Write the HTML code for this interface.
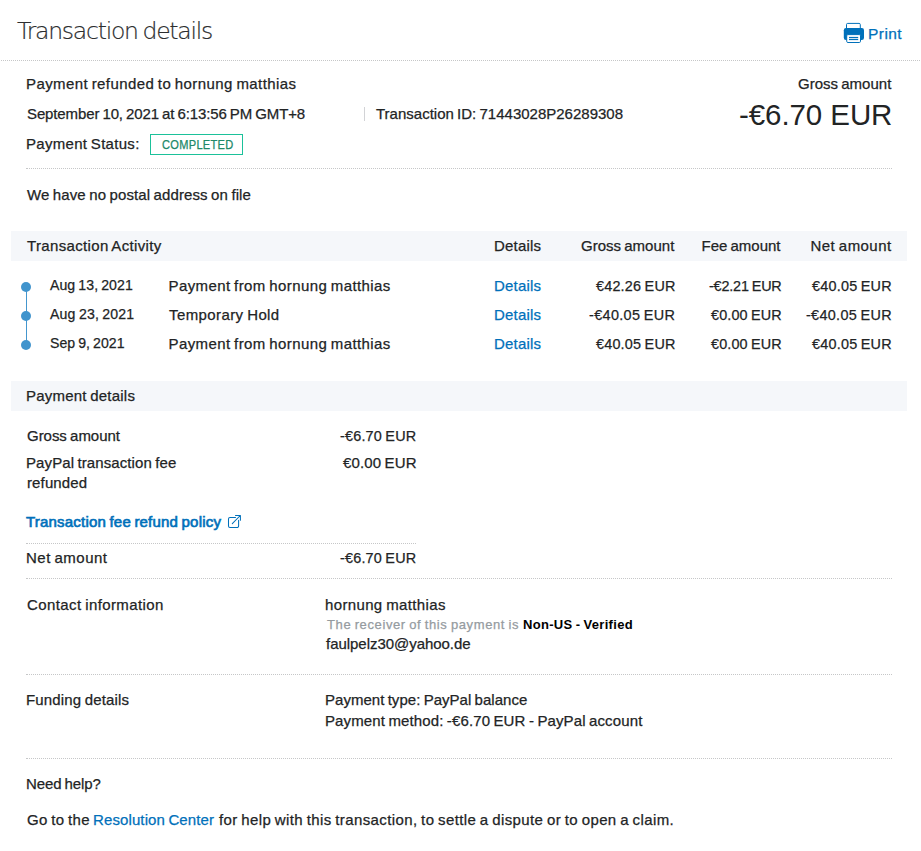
<!DOCTYPE html>
<html lang="en">
<head>
<meta charset="utf-8">
<title>Transaction details</title>
<style>
html,body{margin:0;padding:0;background:#fff;}
body{width:921px;height:851px;position:relative;overflow:hidden;font-family:"Liberation Sans", sans-serif;color:#222425;}
.t{position:absolute;white-space:nowrap;line-height:20px;word-spacing:-0.06em;-webkit-text-stroke:0.25px;}
.dl{position:absolute;height:0;border-top:1px dotted #c6c7c8;}
.band{position:absolute;left:11px;width:896px;height:30px;background:#f5f7fa;}
.dot{position:absolute;left:21px;width:10px;height:10px;border-radius:50%;background:#4094cd;}
</style>
</head>
<body>
<div class="dl" style="left:-1px;width:923px;top:60px;"></div>
<div class="dl" style="left:26px;width:866px;top:168px;"></div>
<div class="band" style="top:231px;"></div>
<div class="band" style="top:381px;"></div>
<div style="position:absolute;left:26px;top:287px;width:1px;height:58px;background:#4496ce;"></div>
<div class="dot" style="top:282px;"></div>
<div class="dot" style="top:311px;"></div>
<div class="dot" style="top:340px;"></div>
<div style="position:absolute;left:150px;top:134px;width:91px;height:19px;border:1px solid #1bc19a;"></div>
<div style="position:absolute;left:363.6px;top:107px;width:1.8px;height:13.5px;background:#d2d3d6;"></div>
<div class="dl" style="left:26px;width:390px;top:543px;"></div>
<div class="dl" style="left:26px;width:866px;top:578px;"></div>
<div class="dl" style="left:26px;width:866px;top:674px;"></div>
<div class="dl" style="left:26px;width:866px;top:758px;"></div>
<svg style="position:absolute;left:838px;top:18px;" width="32" height="30" viewBox="838 18 32 30"><rect x="846.5" y="23.4" width="13.8" height="6.5" rx="1.2" fill="#fff" stroke="#0070ba" stroke-width="1"/><rect x="843.8" y="28" width="20.2" height="12" rx="2.2" fill="#0070ba"/><rect x="846.7" y="34.6" width="13.8" height="7.9" rx="1.2" fill="#fff" stroke="#0070ba" stroke-width="1"/><rect x="849" y="36.9" width="9.2" height="1.2" fill="#0070ba"/><rect x="849" y="38.9" width="9.2" height="1.2" fill="#0070ba"/></svg>
<svg style="position:absolute;left:216px;top:508px;" width="32" height="30" viewBox="216 508 32 30" fill="none" stroke="#0070ba" stroke-width="1.05" stroke-linecap="round" stroke-linejoin="round"><path d="M235.5 517.500H230a1.500 1.500 0 0 0-1.500 1.500V526a1.500 1.500 0 0 0 1.500 1.500H237.100a1.500 1.500 0 0 0 1.500-1.500V520.300"/><path d="M232.300 523.600 240.300 515.500M235.500 515.500H240.400V520.300"/></svg>
<span class="t" id="title" style="left:17.00px;top:21.00px;font-size:23.50px;letter-spacing:-1.250px;color:#2c2e2f;font-family:'DejaVu Sans Light','DejaVu Sans',sans-serif;font-weight:200;-webkit-text-stroke:0.2px;">Transaction details</span>
<span class="t" id="print" style="left:868.00px;top:24.00px;font-size:15.50px;letter-spacing:0.450px;color:#0070ba;">Print</span>
<span class="t" id="l1" style="left:26.00px;top:74.01px;font-size:15.00px;letter-spacing:0.406px;">Payment refunded to hornung matthias</span>
<span class="t" id="l2" style="left:27.00px;top:104.01px;font-size:15.00px;letter-spacing:-0.122px;">September 10, 2021 at 6:13:56 PM GMT+8</span>
<span class="t" id="tid" style="left:376.00px;top:104.01px;font-size:15.00px;letter-spacing:-0.000px;">Transaction ID: 71443028P26289308</span>
<span class="t" id="ps" style="left:26.00px;top:134.01px;font-size:15.00px;letter-spacing:0.296px;">Payment Status:</span>
<span class="t" id="badge" style="left:162.00px;top:135.01px;font-size:12.00px;letter-spacing:0.342px;color:#208868;transform:scaleX(0.92);transform-origin:0 0;">COMPLETED</span>
<span class="t" id="ga" style="left:798.00px;top:74.01px;font-size:15.00px;letter-spacing:0.000px;">Gross amount</span>
<span class="t" id="big" style="left:739.00px;top:105.01px;font-size:29.50px;letter-spacing:-0.080px;-webkit-text-stroke:0;word-spacing:0;">-€6.70 EUR</span>
<span class="t" id="addr" style="left:27.00px;top:185.01px;font-size:15.00px;letter-spacing:0.113px;">We have no postal address on file</span>
<span class="t" id="ta" style="left:27.00px;top:236.01px;font-size:15.00px;letter-spacing:0.341px;">Transaction Activity</span>
<span class="t" id="hd" style="left:494.00px;top:236.01px;font-size:15.00px;letter-spacing:0.180px;">Details</span>
<span class="t" id="hg" style="left:581.00px;top:236.01px;font-size:15.00px;letter-spacing:0.000px;">Gross amount</span>
<span class="t" id="hf" style="left:701.50px;top:236.01px;font-size:15.00px;letter-spacing:-0.020px;">Fee amount</span>
<span class="t" id="hn" style="left:810.50px;top:236.01px;font-size:15.00px;letter-spacing:0.440px;">Net amount</span>
<span class="t" id="r0d" style="left:50.00px;top:275.01px;font-size:15.00px;letter-spacing:0.052px;transform:scaleX(0.94);transform-origin:0 0;">Aug 13, 2021</span>
<span class="t" id="r0t" style="left:168.50px;top:276.01px;font-size:15.00px;letter-spacing:0.392px;">Payment from hornung matthias</span>
<span class="t" id="r0l" style="left:494.00px;top:276.01px;font-size:15.00px;letter-spacing:0.180px;color:#0070ba;">Details</span>
<span class="t" id="r0g" style="left:596.00px;top:276.01px;font-size:15.00px;letter-spacing:0.208px;transform:scaleX(0.96);transform-origin:0 0;">€42.26 EUR</span>
<span class="t" id="r0f" style="left:709.00px;top:276.01px;font-size:15.00px;letter-spacing:-0.188px;transform:scaleX(0.96);transform-origin:0 0;">-€2.21 EUR</span>
<span class="t" id="r0n" style="left:812.00px;top:276.01px;font-size:15.00px;letter-spacing:0.229px;transform:scaleX(0.96);transform-origin:0 0;">€40.05 EUR</span>
<span class="t" id="r1d" style="left:50.00px;top:304.01px;font-size:15.00px;letter-spacing:0.191px;transform:scaleX(0.94);transform-origin:0 0;">Aug 23, 2021</span>
<span class="t" id="r1t" style="left:169.00px;top:305.01px;font-size:15.00px;letter-spacing:0.402px;">Temporary Hold</span>
<span class="t" id="r1l" style="left:494.00px;top:305.01px;font-size:15.00px;letter-spacing:0.180px;color:#0070ba;">Details</span>
<span class="t" id="r1g" style="left:589.00px;top:305.01px;font-size:15.00px;letter-spacing:0.375px;transform:scaleX(0.96);transform-origin:0 0;">-€40.05 EUR</span>
<span class="t" id="r1f" style="left:711.00px;top:305.01px;font-size:15.00px;letter-spacing:0.141px;transform:scaleX(0.96);transform-origin:0 0;">€0.00 EUR</span>
<span class="t" id="r1n" style="left:806.00px;top:305.01px;font-size:15.00px;letter-spacing:0.337px;transform:scaleX(0.96);transform-origin:0 0;">-€40.05 EUR</span>
<span class="t" id="r2d" style="left:50.00px;top:333.01px;font-size:15.00px;letter-spacing:0.019px;transform:scaleX(0.94);transform-origin:0 0;">Sep 9, 2021</span>
<span class="t" id="r2t" style="left:168.50px;top:334.01px;font-size:15.00px;letter-spacing:0.392px;">Payment from hornung matthias</span>
<span class="t" id="r2l" style="left:494.00px;top:334.01px;font-size:15.00px;letter-spacing:0.180px;color:#0070ba;">Details</span>
<span class="t" id="r2g" style="left:596.00px;top:334.01px;font-size:15.00px;letter-spacing:0.208px;transform:scaleX(0.96);transform-origin:0 0;">€40.05 EUR</span>
<span class="t" id="r2f" style="left:711.00px;top:334.01px;font-size:15.00px;letter-spacing:0.141px;transform:scaleX(0.96);transform-origin:0 0;">€0.00 EUR</span>
<span class="t" id="r2n" style="left:812.00px;top:334.01px;font-size:15.00px;letter-spacing:0.229px;transform:scaleX(0.96);transform-origin:0 0;">€40.05 EUR</span>
<span class="t" id="pd" style="left:26.00px;top:386.01px;font-size:15.00px;letter-spacing:0.219px;">Payment details</span>
<span class="t" id="pg" style="left:27.00px;top:426.01px;font-size:15.00px;letter-spacing:-0.033px;">Gross amount</span>
<span class="t" id="pgv" style="left:340.00px;top:426.01px;font-size:15.00px;letter-spacing:0.208px;transform:scaleX(0.96);transform-origin:0 0;">-€6.70 EUR</span>
<span class="t" id="pf1" style="left:26.00px;top:453.01px;font-size:15.00px;letter-spacing:0.094px;">PayPal transaction fee</span>
<span class="t" id="pfv" style="left:343.00px;top:453.01px;font-size:15.00px;letter-spacing:0.135px;">€0.00 EUR</span>
<span class="t" id="pf2" style="left:27.00px;top:473.01px;font-size:15.00px;letter-spacing:0.129px;">refunded</span>
<span class="t" id="pol" style="left:26.00px;top:512.01px;font-size:15.00px;letter-spacing:0.199px;color:#0070ba;-webkit-text-stroke:0.65px;">Transaction fee refund policy</span>
<span class="t" id="na" style="left:26.00px;top:548.00px;font-size:15.00px;letter-spacing:0.480px;">Net amount</span>
<span class="t" id="nav" style="left:340.00px;top:548.00px;font-size:15.00px;letter-spacing:0.208px;transform:scaleX(0.96);transform-origin:0 0;">-€6.70 EUR</span>
<span class="t" id="ci" style="left:27.00px;top:595.00px;font-size:15.00px;letter-spacing:0.400px;">Contact information</span>
<span class="t" id="cn" style="left:325.00px;top:595.01px;font-size:15.00px;letter-spacing:0.360px;">hornung matthias</span>
<span class="t" id="cr" style="left:327.00px;top:615.00px;font-size:13.00px;letter-spacing:0.612px;color:#959b9f;">The receiver of this payment is</span>
<span class="t" id="cv" style="left:523.00px;top:615.00px;font-size:13.00px;letter-spacing:0.315px;color:#000;font-weight:bold;-webkit-text-stroke:0;">Non-US - Verified</span>
<span class="t" id="ce" style="left:326.00px;top:634.00px;font-size:15.00px;letter-spacing:-0.040px;">faulpelz30@yahoo.de</span>
<span class="t" id="fd" style="left:26.00px;top:690.01px;font-size:15.00px;letter-spacing:0.154px;">Funding details</span>
<span class="t" id="ft" style="left:325.00px;top:690.01px;font-size:15.00px;letter-spacing:0.027px;">Payment type: PayPal balance</span>
<span class="t" id="fm" style="left:325.00px;top:711.01px;font-size:15.00px;letter-spacing:0.120px;">Payment method: -€6.70 EUR - PayPal account</span>
<span class="t" id="nh" style="left:26.00px;top:774.01px;font-size:15.00px;letter-spacing:-0.120px;">Need help?</span>
<span class="t" id="go1" style="left:27.00px;top:810.01px;font-size:15.00px;letter-spacing:0.338px;">Go to the</span>
<span class="t" id="go2" style="left:93.00px;top:810.01px;font-size:15.00px;letter-spacing:0.113px;color:#0070ba;">Resolution Center</span>
<span class="t" id="go3" style="left:219.00px;top:810.01px;font-size:15.00px;letter-spacing:0.386px;">for help with this transaction, to settle a dispute or to open a claim.</span>
</body>
</html>
